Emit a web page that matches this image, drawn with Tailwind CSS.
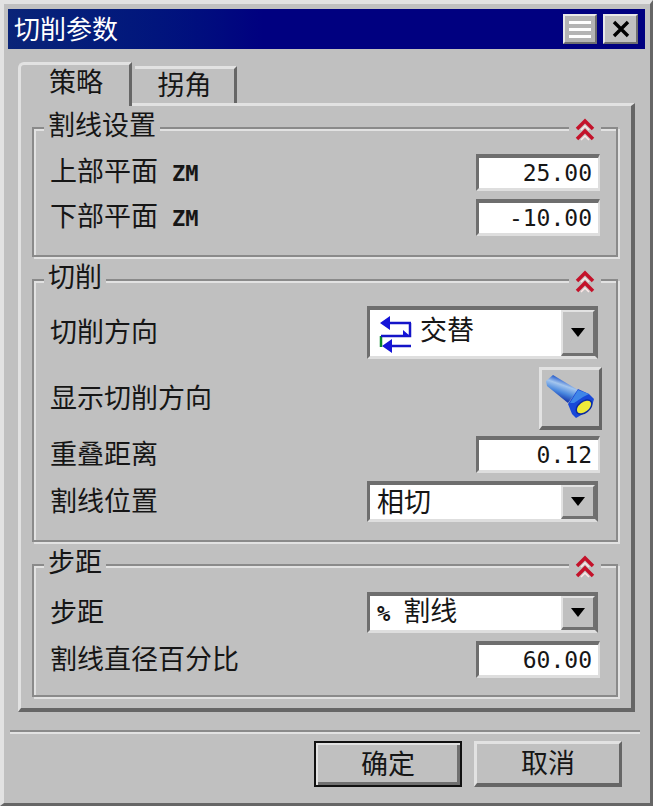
<!DOCTYPE html>
<html lang="zh-CN">
  <head>
    <meta charset="UTF-8" />
    <title>切削参数</title>
    <script src="https://cdn.jsdelivr.net/npm/@tailwindcss/browser@4"></script>
  </head>
  <body class="bg-[#c0c0c0]">
    <!-- Dialog window -->
    <div
      class="w-[653px] h-[806px] overflow-hidden bg-[#c0c0c0] border-t-[4px] border-l-[4px] border-r-[3px] border-b-[3px] border-t-[#e2e2e2] border-l-[#e2e2e2] border-r-[#666666] border-b-[#666666] text-[27px] leading-none text-[#161616] font-['Noto_Sans_CJK_SC',sans-serif]"
    >
      <!-- Title bar -->
      <div class="mt-[5px] ml-[4px] w-[637px] h-[40px] flex items-center bg-gradient-to-r from-[#0a2478] to-[#000080] to-40% text-white">
        <span class="ml-[6px] pb-[2px] text-[26px]">切削参数</span>
        <div class="ml-auto mr-[7px] flex gap-[6px]">
          <div class="w-[34px] h-[30px] flex flex-col justify-center gap-[4px] px-[4px] bg-[#b4b4b4] border-2 border-t-[#e8e8e8] border-l-[#e8e8e8] border-r-[#707070] border-b-[#707070]">
            <div class="h-[3px] bg-white"></div>
            <div class="h-[3px] bg-white"></div>
            <div class="h-[3px] bg-white"></div>
          </div>
          <div class="w-[35px] h-[30px] flex items-center justify-center bg-[#c0c0c0] border-2 border-t-[#e8e8e8] border-l-[#e8e8e8] border-r-[#707070] border-b-[#707070]">
            <svg width="20" height="18" viewBox="0 0 20 18"><path d="M3 2 L17 16 M17 2 L3 16" stroke="#000" stroke-width="3.4" /></svg>
          </div>
        </div>
      </div>

      <!-- Tabs -->
      <div class="mt-[13px] ml-[14px] h-[41px] flex items-end relative z-10">
        <div class="w-[114px] h-[44px] -mb-[3px] flex items-center justify-center bg-[#c0c0c0] border-t-[3px] border-l-[3px] border-r-[3px] border-t-[#e2e2e2] border-l-[#e2e2e2] border-r-[#666666] rounded-tl-[6px] pb-[10px] pl-[2px]">策略</div>
        <div class="ml-[3px] w-[102px] h-[37px] flex items-center justify-center border-t-[3px] border-r-[3px] border-t-[#e2e2e2] border-r-[#666666] pb-[6px]">拐角</div>
      </div>

      <!-- Tab panel -->
      <div class="ml-[14px] w-[617px] h-[609px] pt-[21px] pl-[11px] border-t-[3px] border-l-[3px] border-r-[4px] border-b-[4px] border-t-[#e2e2e2] border-l-[#e2e2e2] border-r-[#666666] border-b-[#666666]">
        <!-- 割线设置 -->
        <div class="relative w-[586px] h-[130px] pt-[25px] pl-[16px] pr-[16px] border-2 border-[#8a8a8a] shadow-[inset_2px_2px_0_#e2e2e2,2px_2px_0_#e2e2e2]">
          <div class="absolute left-[10px] -top-[21px] px-[4px] h-[30px] flex items-center bg-[#c0c0c0]">割线设置</div>
          <div class="absolute right-[15px] -top-[11px] px-[5px] bg-[#c0c0c0]">
            <svg class="block" width="22" height="24" viewBox="0 0 22 24"><path d="M3 11 L11 3 L19 11 M3 21 L11 13 L19 21" fill="none" stroke="#c4122a" stroke-width="3.5" /><path d="M7 12 L11 8 L15 12 M7 22 L11 18 L15 22" fill="none" stroke="#ffe8e8" stroke-width="1.5" /></svg>
          </div>
          <div class="flex items-center justify-between">
            <span class="pb-[4px]">上部平面<span class="ml-[14px] font-['DejaVu_Sans_Mono',monospace] text-[22px] font-bold">ZM</span></span>
            <div class="w-[124px] h-[37px] flex items-center justify-end pr-[6px] bg-white border-t-[4px] border-l-[3px] border-r-[2px] border-b-[3px] border-t-[#6e6e6e] border-l-[#6e6e6e] border-r-[#dedede] border-b-[#dedede] font-['DejaVu_Sans_Mono',monospace] text-[23px]">25.00</div>
          </div>
          <div class="mt-[8px] flex items-center justify-between">
            <span class="pb-[4px]">下部平面<span class="ml-[14px] font-['DejaVu_Sans_Mono',monospace] text-[22px] font-bold">ZM</span></span>
            <div class="w-[124px] h-[37px] flex items-center justify-end pr-[6px] bg-white border-t-[4px] border-l-[3px] border-r-[2px] border-b-[3px] border-t-[#6e6e6e] border-l-[#6e6e6e] border-r-[#dedede] border-b-[#dedede] font-['DejaVu_Sans_Mono',monospace] text-[23px]">-10.00</div>
          </div>
        </div>

        <!-- 切削 -->
        <div class="relative mt-[22px] w-[586px] h-[263px] pt-[25px] pl-[16px] pr-[16px] border-2 border-[#8a8a8a] shadow-[inset_2px_2px_0_#e2e2e2,2px_2px_0_#e2e2e2]">
          <div class="absolute left-[10px] -top-[21px] px-[4px] h-[30px] flex items-center bg-[#c0c0c0]">切削</div>
          <div class="absolute right-[15px] -top-[11px] px-[5px] bg-[#c0c0c0]">
            <svg class="block" width="22" height="24" viewBox="0 0 22 24"><path d="M3 11 L11 3 L19 11 M3 21 L11 13 L19 21" fill="none" stroke="#c4122a" stroke-width="3.5" /><path d="M7 12 L11 8 L15 12 M7 22 L11 18 L15 22" fill="none" stroke="#ffe8e8" stroke-width="1.5" /></svg>
          </div>
          <div class="flex items-center justify-between">
            <span class="pb-[4px]">切削方向</span>
            <div class="mr-[2px] w-[231px] h-[53px] flex bg-white border-t-[4px] border-l-[3px] border-r-[3px] border-b-[3px] border-t-[#6e6e6e] border-l-[#6e6e6e] border-r-[#6e6e6e] border-b-[#dedede]">
              <svg class="ml-[8px] mt-[6px]" width="34" height="38" viewBox="0 0 34 38">
                <path d="M3 20 V31" fill="none" stroke="#0a8a2a" stroke-width="2.5" />
                <path d="M32 7 V20 H3 M12 7 H33 M14 30 H33" fill="none" stroke="#1414c8" stroke-width="2.5" />
                <path d="M2 7 L12 0 V14 Z M4 30 L14 23 V37 Z M25 14 L32 20 L25 20 Z" fill="#1414d8" />
              </svg>
              <span class="ml-[8px] mt-[5px]">交替</span>
              <div class="ml-auto w-[34px] flex items-center justify-center bg-[#c0c0c0] border-t-2 border-l-2 border-r-2 border-b-[3px] border-t-[#e2e2e2] border-l-[#e2e2e2] border-r-[#707070] border-b-[#707070]">
                <svg width="16" height="9" viewBox="0 0 16 9"><path d="M1 0 H15 L8 9 Z" fill="#000" /></svg>
              </div>
            </div>
          </div>
          <div class="mt-[8px] flex items-center justify-between">
            <span class="pb-[4px]">显示切削方向</span>
            <div class="-mr-[2px] w-[63px] h-[63px] flex items-center justify-center bg-[#c0c0c0] border-t-[3px] border-l-[3px] border-r-[3px] border-b-[4px] border-t-[#e2e2e2] border-l-[#e2e2e2] border-r-[#666666] border-b-[#666666]">
              <svg width="52" height="50" viewBox="0 0 52 50">
                <defs>
                  <linearGradient id="torch" x1="0.68" y1="0.05" x2="0.32" y2="0.95">
                    <stop offset="0.12" stop-color="#1f55c8" />
                    <stop offset="0.36" stop-color="#a4c6ee" />
                    <stop offset="0.62" stop-color="#4a88de" />
                    <stop offset="0.9" stop-color="#1230a8" />
                  </linearGradient>
                </defs>
                <path d="M1 8 L8 2 L33 17 L23 30 L2 13 Z" fill="url(#torch)" />
                <path d="M33 16 L44 21 L49 26 L47 33 L38 41 L31 45 L27 41 L23 31 Z" fill="#1848d8" />
                <path d="M33 17 L44 21 L38 24 L29 30 L25 30 Z" fill="#3f86e8" />
                <ellipse cx="39" cy="34" rx="9" ry="5.5" transform="rotate(-38 39 34)" fill="#eeea3a" stroke="#0c2aa0" stroke-width="1.5" />
              </svg>
            </div>
          </div>
          <div class="mt-[6px] flex items-center justify-between">
            <span class="pb-[4px]">重叠距离</span>
            <div class="w-[124px] h-[37px] flex items-center justify-end pr-[6px] bg-white border-t-[4px] border-l-[3px] border-r-[2px] border-b-[3px] border-t-[#6e6e6e] border-l-[#6e6e6e] border-r-[#dedede] border-b-[#dedede] font-['DejaVu_Sans_Mono',monospace] text-[23px]">0.12</div>
          </div>
          <div class="mt-[8px] flex items-center justify-between">
            <span class="pb-[4px]">割线位置</span>
            <div class="mr-[2px] w-[231px] h-[41px] flex items-center bg-white border-t-[4px] border-l-[3px] border-r-[3px] border-b-[3px] border-t-[#6e6e6e] border-l-[#6e6e6e] border-r-[#6e6e6e] border-b-[#dedede]">
              <span class="ml-[7px] pb-[4px]">相切</span>
              <div class="ml-auto w-[34px] h-full flex items-center justify-center bg-[#c0c0c0] border-t-2 border-l-2 border-r-2 border-b-[3px] border-t-[#e2e2e2] border-l-[#e2e2e2] border-r-[#707070] border-b-[#707070]">
                <svg width="16" height="9" viewBox="0 0 16 9"><path d="M1 0 H15 L8 9 Z" fill="#000" /></svg>
              </div>
            </div>
          </div>
        </div>

        <!-- 步距 -->
        <div class="relative mt-[22px] w-[586px] h-[133px] pt-[26px] pl-[16px] pr-[16px] border-2 border-[#8a8a8a] shadow-[inset_2px_2px_0_#e2e2e2,2px_2px_0_#e2e2e2]">
          <div class="absolute left-[10px] -top-[21px] px-[4px] h-[30px] flex items-center bg-[#c0c0c0]">步距</div>
          <div class="absolute right-[15px] -top-[11px] px-[5px] bg-[#c0c0c0]">
            <svg class="block" width="22" height="24" viewBox="0 0 22 24"><path d="M3 11 L11 3 L19 11 M3 21 L11 13 L19 21" fill="none" stroke="#c4122a" stroke-width="3.5" /><path d="M7 12 L11 8 L15 12 M7 22 L11 18 L15 22" fill="none" stroke="#ffe8e8" stroke-width="1.5" /></svg>
          </div>
          <div class="flex items-center justify-between">
            <span class="pb-[4px]">步距</span>
            <div class="mr-[2px] w-[231px] h-[41px] flex items-center bg-white border-t-[4px] border-l-[3px] border-r-[3px] border-b-[3px] border-t-[#6e6e6e] border-l-[#6e6e6e] border-r-[#6e6e6e] border-b-[#dedede]">
              <span class="ml-[7px] pb-[5px]"><span class="font-['DejaVu_Sans_Mono',monospace] text-[22px] font-bold">%</span><span class="ml-[13px]">割线</span></span>
              <div class="ml-auto w-[34px] h-full flex items-center justify-center bg-[#c0c0c0] border-t-2 border-l-2 border-r-2 border-b-[3px] border-t-[#e2e2e2] border-l-[#e2e2e2] border-r-[#707070] border-b-[#707070]">
                <svg width="16" height="9" viewBox="0 0 16 9"><path d="M1 0 H15 L8 9 Z" fill="#000" /></svg>
              </div>
            </div>
          </div>
          <div class="mt-[8px] flex items-center justify-between">
            <span class="pb-[4px]">割线直径百分比</span>
            <div class="w-[124px] h-[37px] flex items-center justify-end pr-[6px] bg-white border-t-[4px] border-l-[3px] border-r-[2px] border-b-[3px] border-t-[#6e6e6e] border-l-[#6e6e6e] border-r-[#dedede] border-b-[#dedede] font-['DejaVu_Sans_Mono',monospace] text-[23px]">60.00</div>
          </div>
        </div>
      </div>

      <!-- Separator -->
      <div class="mt-[18px] ml-[6px] w-[630px] h-[4px] border-t-2 border-b-2 border-t-[#8a8a8a] border-b-[#e2e2e2]"></div>

      <!-- Buttons -->
      <div class="mt-[7px] ml-[310px] flex gap-[12px]">
        <div class="w-[148px] h-[46px] flex items-center justify-center pb-[4px] bg-[#c0c0c0] border-2 border-[#111111] shadow-[inset_2px_2px_0_#e2e2e2,inset_-3px_-3px_0_#707070]">确定</div>
        <div class="w-[148px] h-[46px] flex items-center justify-center pb-[4px] bg-[#c0c0c0] border-t-[3px] border-l-[3px] border-r-[3px] border-b-[4px] border-t-[#e2e2e2] border-l-[#e2e2e2] border-r-[#666666] border-b-[#666666]">取消</div>
      </div>
    </div>
  </body>
</html>
